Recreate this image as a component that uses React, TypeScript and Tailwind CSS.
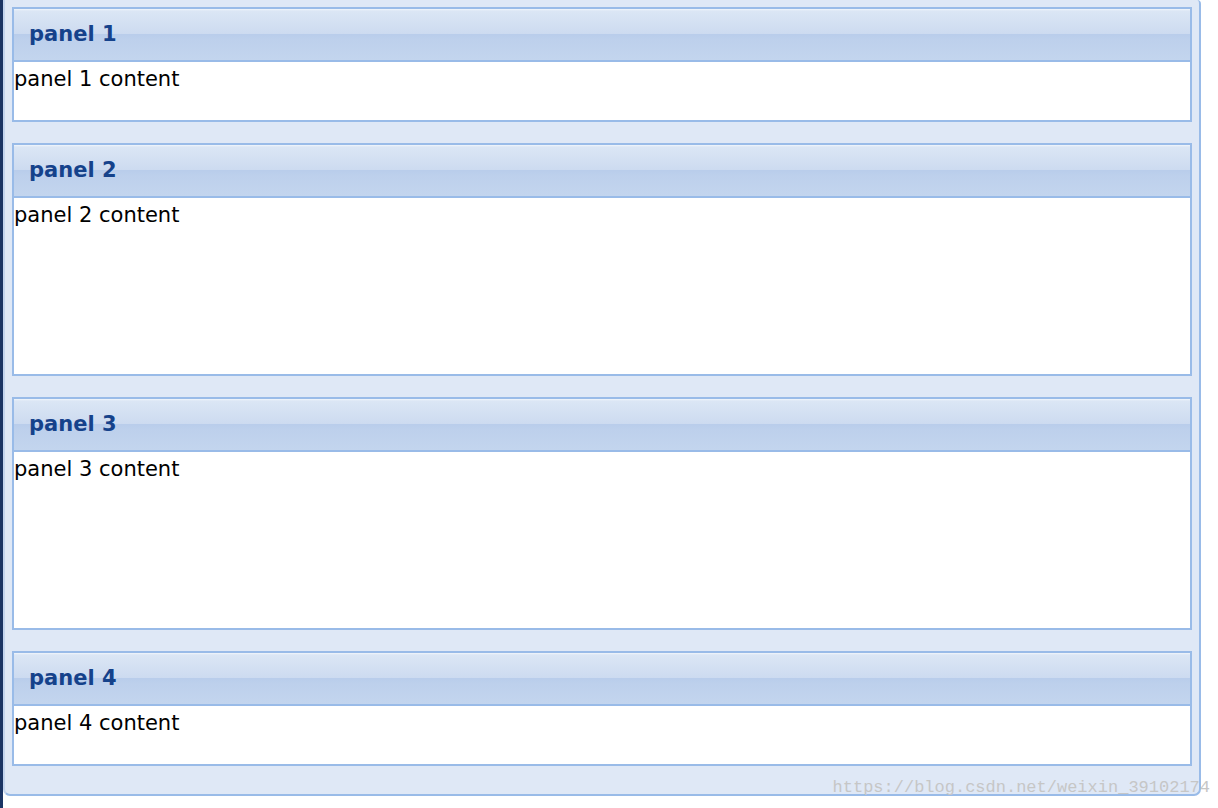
import React from "react";

type PanelProps = {
  title: string;
  bodyHeight: string;
};

const Panel = ({ title, bodyHeight }: PanelProps) => {
  return (
    <div className="border-2 border-[#99bbe8] bg-white">
      <div className="h-[53px] flex items-center pl-[15px] border-b-2 border-[#99bbe8] bg-[linear-gradient(to_bottom,#f2f6fb_0px,#dbe6f5_2px,#cddbf0_48%,#b9cdeb_50%,#bdd0ec_60%,#c3d5ee_100%)]">
        <span className="text-[21px] font-bold text-[#15428b] leading-none">
          {title}
        </span>
      </div>
      <div className={`${bodyHeight} pt-[2px] text-[21px] leading-[30px] text-black`}>
        {title} content
      </div>
    </div>
  );
};

const App = () => {
  const panels = [
    { title: "panel 1", bodyHeight: "h-[58px]" },
    { title: "panel 2", bodyHeight: "h-[176px]" },
    { title: "panel 3", bodyHeight: "h-[176px]" },
    { title: "panel 4", bodyHeight: "h-[58px]" },
  ];

  return (
    <div
      className="relative flex h-[808px] w-[1218px] bg-white overflow-hidden"
      style={{ fontFamily: '"DejaVu Sans", Verdana, sans-serif' }}
    >
      <div className="w-[3px] bg-[#1b3464]" />
      <div className="w-[1198px] h-[796px] border-2 border-t-0 border-[#99bbe8] border-l-[#c3d4ee] rounded-b-[7px] rounded-tr-[4px] bg-[#dfe8f6] px-[7px] pt-[7px] pb-[28px] flex flex-col gap-[21px]">
        {panels.map((p) => (
          <Panel key={p.title} title={p.title} bodyHeight={p.bodyHeight} />
        ))}
      </div>
      <div
        className="absolute right-[8px] top-[777px] text-[17px] leading-[22px] text-[#c6c6c6] whitespace-nowrap"
        style={{ fontFamily: '"Liberation Mono", monospace' }}
      >
        https://blog.csdn.net/weixin_39102174
      </div>
    </div>
  );
};

export default App;
